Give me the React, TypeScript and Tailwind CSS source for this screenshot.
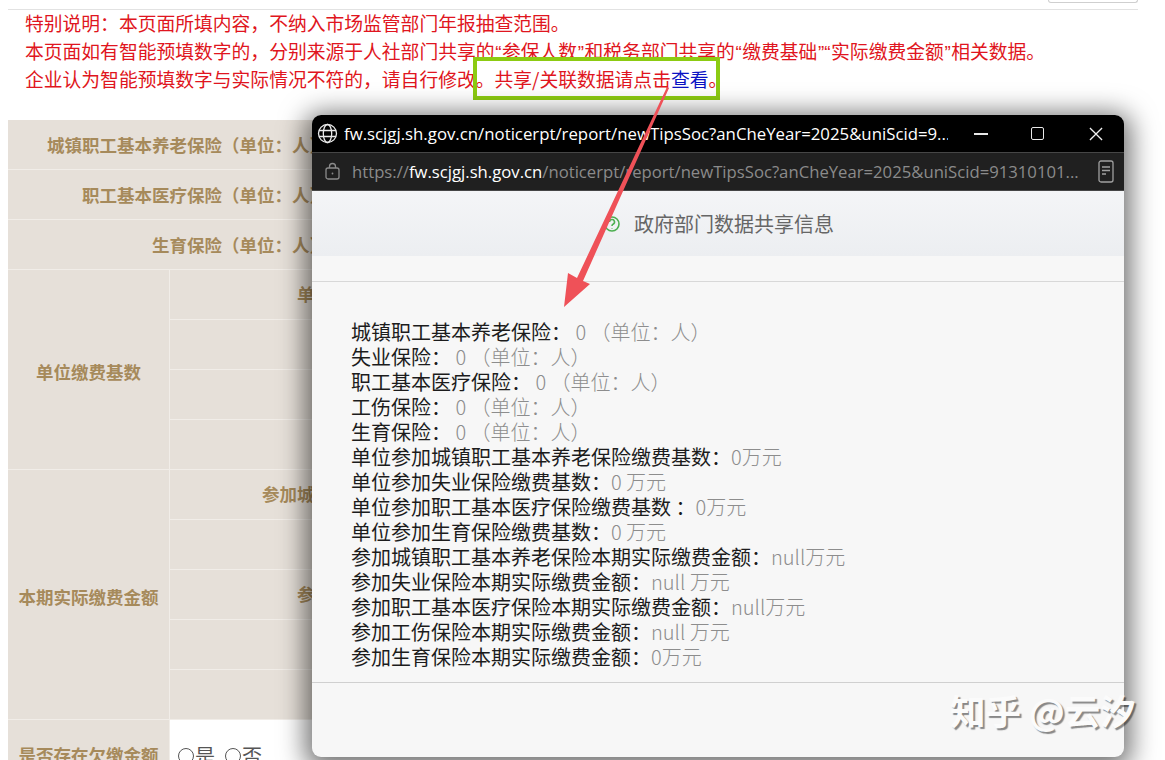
const cjk = "font-['Noto_Sans_CJK_SC','Liberation_Sans',sans-serif]";
const qt = "font-['Liberation_Sans',sans-serif] px-[0.6px]";

function Label({ text, pad }: { text: string; pad: string }) {
  return (
    <div className={`h-[50px] flex items-center whitespace-nowrap border-b border-[#f1ede8] ${pad}`}>{text}</div>
  );
}

const unit = " 0 \uFF08单位\uFF1A人\uFF09";
const popupLines: [string, string][] = [
  ["城镇职工基本养老保险\uFF1A", unit],
  ["失业保险\uFF1A", unit],
  ["职工基本医疗保险\uFF1A", unit],
  ["工伤保险\uFF1A", unit],
  ["生育保险\uFF1A", unit],
  ["单位参加城镇职工基本养老保险缴费基数\uFF1A", "0万元"],
  ["单位参加失业保险缴费基数\uFF1A", "0 万元"],
  ["单位参加职工基本医疗保险缴费基数 \uFF1A", "0万元"],
  ["单位参加生育保险缴费基数\uFF1A", "0 万元"],
  ["参加城镇职工基本养老保险本期实际缴费金额\uFF1A", "null万元"],
  ["参加失业保险本期实际缴费金额\uFF1A", "null 万元"],
  ["参加职工基本医疗保险本期实际缴费金额\uFF1A", "null万元"],
  ["参加工伤保险本期实际缴费金额\uFF1A", "null 万元"],
  ["参加生育保险本期实际缴费金额\uFF1A", "0万元"],
];

export default function App() {
  return (
    <div className={`relative w-[1165px] h-[760px] overflow-hidden bg-white ${cjk}`}>
      {/* top rule */}
      <div className="h-[10px] ml-2 w-[1130px] border-b border-[#e2e2e2] flex justify-end">
        <div className="w-[90px] h-[3px] border border-t-0 border-[#cfcfcf] rounded-b-sm" />
      </div>

      {/* notice */}
      <div className="pl-[25px] -mt-[1px] text-[18.8px] leading-[28px] text-[#e01520] whitespace-nowrap">
        <p className="h-[28px]">{"特别说明\uFF1A本页面所填内容\uFF0C不纳入市场监管部门年报抽查范围。"}</p>
        <p className="h-[28px]">
          {"本页面如有智能预填数字的\uFF0C分别来源于人社部门共享的"}<span className={qt}>“</span>参保人数<span className={qt}>”</span>和税务部门共享的<span className={qt}>“</span>缴费基础<span className={qt}>”“</span>实际缴费金额<span className={qt}>”</span>相关数据。
        </p>
        <p className="h-[28px]">
          {"企业认为智能预填数字与实际情况不符的\uFF0C请自行修改。共享/关联数据请点击"}
          <span className="text-[#0b12c4]">查看</span>。
        </p>
      </div>

      {/* table */}
      <div className="ml-2 mt-[27px] w-[1110px] text-[17.5px] font-bold text-[#a68a5b]">
        <div className="bg-[#e6e0d9]">
          <div className="h-[50px] flex items-center justify-end pr-[791px] pt-[1px] whitespace-nowrap border-b border-[#f1ede8]">{"城镇职工基本养老保险\uFF08单位\uFF1A人\uFF09"}</div>
          <div className="h-[50px] flex items-center justify-end pr-[791px] pt-[1px] whitespace-nowrap border-b border-[#f1ede8]">{"职工基本医疗保险\uFF08单位\uFF1A人\uFF09"}</div>
          <div className="h-[50px] flex items-center justify-end pr-[791px] pt-[1px] whitespace-nowrap border-b border-[#f1ede8]">{"生育保险\uFF08单位\uFF1A人\uFF09"}</div>
        </div>
        <div className="flex bg-[#e6e0d9]">
          <div className="w-[162px] h-[200px] flex items-center justify-center pt-[6px] border-r border-b border-[#f1ede8]">单位缴费基数</div>
          <div className="flex-1 overflow-hidden">
            <Label text="单位参加城镇职工基本养老保险缴费基数" pad="pl-[127px]" />
            <Label text="" pad="" />
            <Label text="" pad="" />
            <Label text="" pad="" />
          </div>
        </div>
        <div className="flex bg-[#e6e0d9]">
          <div className="w-[162px] h-[250px] flex items-center justify-center pt-[6px] border-r border-b border-[#f1ede8]">本期实际缴费金额</div>
          <div className="flex-1 overflow-hidden">
            <Label text="参加城镇职工基本养老保险本期实际缴费金额" pad="pl-[92px]" />
            <Label text="" pad="" />
            <Label text="参加职工基本医疗保险本期实际缴费金额" pad="pl-[127px]" />
            <Label text="" pad="" />
            <Label text="" pad="" />
          </div>
        </div>
        <div className="flex h-[50px]">
          <div className="w-[162px] bg-[#e6e0d9] border-r border-[#f1ede8] flex items-center justify-center pt-[21px]">是否存在欠缴金额</div>
          <div className="flex-1 flex items-center pl-[8px] pt-[21px] font-normal text-[20px] text-[#555]">
            <span className="w-[16px] h-[16px] rounded-full border border-[#555] mr-[1px]" />是
            <span className="w-[16px] h-[16px] rounded-full border border-[#555] ml-[10px] mr-[1px]" />否
          </div>
        </div>
      </div>

      {/* annotation rectangle */}
      <div className="absolute left-[473px] top-[57px] w-[247px] h-[43px] border-[4px] border-[#8ccb12]" />

      {/* popup window */}
      <div className="absolute left-[312px] top-[115px] w-[812px] h-[642px] rounded-[9px] bg-[#f7f7f7] shadow-[0_5px_26px_7px_rgba(0,0,0,0.55)] flex flex-col overflow-hidden">
        <div className="h-[37px] shrink-0 bg-black flex items-center text-white text-[16.8px] font-['Open_Sans','Noto_Sans',sans-serif]">
          <svg className="ml-[5px] mr-[6px] shrink-0" width="21" height="21" viewBox="0 0 21 21" fill="none" stroke="#e8e8e8" strokeWidth="1.3">
            <circle cx="10.5" cy="10.5" r="9" />
            <ellipse cx="10.5" cy="10.5" rx="4.2" ry="9" />
            <path d="M2 7.5h17M2 13.5h17" />
          </svg>
          <span className="w-[604px] whitespace-nowrap overflow-hidden">fw.scjgj.sh.gov.cn/noticerpt/report/newTipsSoc?anCheYear=2025&uniScid=9...</span>
          <div className="ml-[26px] w-[14px] border-t-2 border-[#e8e8e8]" />
          <div className="ml-[43px] w-[13px] h-[13px] border-[1.5px] border-[#e8e8e8] rounded-[2px]" />
          <svg className="ml-[45px]" width="14" height="14" viewBox="0 0 15 15" stroke="#f0f0f0" strokeWidth="1.4">
            <path d="M1 1l13 13M14 1L1 14" />
          </svg>
        </div>
        <div className="h-[39px] shrink-0 bg-[#202020] border-t border-b border-[#464646] flex items-center text-[16.7px] text-[#8b8b8b] font-['Open_Sans','Noto_Sans',sans-serif]">
          <svg className="ml-[12px] mr-[11px] shrink-0" width="17" height="19" viewBox="0 0 17 19" fill="none" stroke="#8b8b8b" strokeWidth="1.3">
            <rect x="2" y="6" width="13" height="11" rx="2" />
            <path d="M5.5 6V4.5a3 3 0 0 1 6 0V6" />
            <circle cx="8.5" cy="11.5" r="0.9" fill="#8b8b8b" stroke="none" />
          </svg>
          <span className="w-[739px] whitespace-nowrap overflow-hidden">
            https://<span className="text-white">fw.scjgj.sh.gov.cn</span>/noticerpt/report/newTipsSoc?anCheYear=2025&uniScid=91310101...
          </span>
          <svg className="ml-[7px]" width="16" height="23" viewBox="0 0 16 23" fill="none" stroke="#a0a0a0" strokeWidth="1.3">
            <rect x="1" y="1" width="14" height="21" rx="2" />
            <path d="M4 7h8M4 10.5h8M4 14h4" />
          </svg>
        </div>
        <div className="h-[65px] shrink-0 bg-gradient-to-b from-[#f4f5f7] to-[#eceef1] flex items-center pl-[291px] text-[20px] text-[#666]">
          <svg className="mr-[13px]" width="18" height="18" viewBox="0 0 18 18" fill="none" stroke="#4caf50" strokeWidth="1.6">
            <circle cx="9" cy="9" r="7" />
            <path d="M6.5 7a2.5 2.5 0 1 1 3.5 2.3c-.7.3-1 .8-1 1.7M9 13v.5" />
          </svg>
          政府部门数据共享信息
        </div>
        <div className="h-[26px] shrink-0 border-b border-[#d8d8d8]" />
        <div className="h-[401px] shrink-0 border-b border-[#d0d0d0] pl-[39px] pt-[37px] text-[20px] leading-[25px] text-[#1c1c1c] whitespace-pre">
          {popupLines.map(([a, b]) => (
            <div key={a}>
              {a}
              <span className="text-[#8d8d8d] font-light">{b}</span>
            </div>
          ))}
        </div>
      </div>

      {/* arrow */}
      <svg className="absolute left-0 top-0 pointer-events-none" width="1165" height="760" viewBox="0 0 1165 760">
        <path d="M667 87L669 88L583 281L590 284L564 307L568 273L577 278Z" fill="#ef5158" />
      </svg>

      {/* watermark */}
      <div className="absolute left-[950px] top-[686px] text-[35.5px] leading-[48px] font-bold text-[#fbfbfb] whitespace-nowrap [text-shadow:2px_2px_1px_rgba(0,0,0,0.45)]">
        知乎 @云汐
      </div>
    </div>
  );
}
